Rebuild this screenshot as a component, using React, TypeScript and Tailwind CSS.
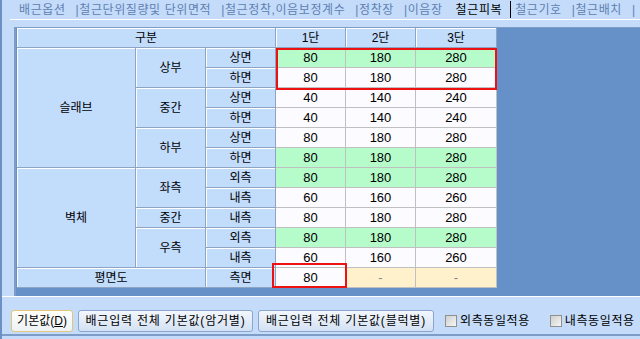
import React from 'react'

type Row = { cells: { text: string; cls: string }[]; vals: string[]; tone: 'g' | 'w' | 'y' }

const tabs = [
  { label: '배근옵션', active: false },
  { label: '|철근단위질량및 단위면적', active: false },
  { label: '|철근정착,이음보정계수', active: false },
  { label: '|정착장', active: false },
  { label: '|이음장', active: false },
  { label: '철근피복', active: true },
  { label: '철근기호', active: false },
  { label: '|철근배치', active: false },
  { label: '|', active: false },
]

const rows: Row[] = [
  { cells: [{ text: '슬래브', cls: 'row-span-6' }, { text: '상부', cls: 'row-span-2' }, { text: '상면', cls: '' }], vals: ['80', '180', '280'], tone: 'g' },
  { cells: [{ text: '하면', cls: '' }], vals: ['80', '180', '280'], tone: 'w' },
  { cells: [{ text: '중간', cls: 'row-span-2' }, { text: '상면', cls: '' }], vals: ['40', '140', '240'], tone: 'w' },
  { cells: [{ text: '하면', cls: '' }], vals: ['40', '140', '240'], tone: 'w' },
  { cells: [{ text: '하부', cls: 'row-span-2' }, { text: '상면', cls: '' }], vals: ['80', '180', '280'], tone: 'w' },
  { cells: [{ text: '하면', cls: '' }], vals: ['80', '180', '280'], tone: 'g' },
  { cells: [{ text: '벽체', cls: 'row-span-5' }, { text: '좌측', cls: 'row-span-2' }, { text: '외측', cls: '' }], vals: ['80', '180', '280'], tone: 'g' },
  { cells: [{ text: '내측', cls: '' }], vals: ['60', '160', '260'], tone: 'w' },
  { cells: [{ text: '중간', cls: '' }, { text: '내측', cls: '' }], vals: ['80', '180', '280'], tone: 'w' },
  { cells: [{ text: '우측', cls: 'row-span-2' }, { text: '외측', cls: '' }], vals: ['80', '180', '280'], tone: 'g' },
  { cells: [{ text: '내측', cls: '' }], vals: ['60', '160', '260'], tone: 'w' },
  { cells: [{ text: '평면도', cls: 'col-span-2' }, { text: '측면', cls: '' }], vals: ['80', '-', '-'], tone: 'y' },
]

const label =
  'flex items-center justify-center bg-[#c2dcfc] border-r border-b border-[#8fa3c2] shadow-[inset_1px_1px_0_#ffffff] text-[12px] text-black'

function valueTone(tone: Row['tone'], i: number) {
  if (tone === 'g') return 'bg-[#b6fcca]'
  if (tone === 'y') return i === 0 ? 'bg-[#fcfbff]' : 'bg-[#fff1cc] text-[#888]'
  return 'bg-[#fcfbff]'
}

function Checkbox({ label }: { label: string }) {
  return (
    <div className="flex items-center gap-[3px]">
      <span className="w-[12px] h-[12px] border border-[#8f9090] bg-gradient-to-br from-[#cfcfcf] to-[#f6f6f6]" />
      <span className="text-[12px] tracking-[0.6px] text-black">{label}</span>
    </div>
  )
}

export default function App() {
  return (
    <div className="w-[640px] h-[339px] bg-[#c4dcfa] border-l-2 border-[#6d90c4] flex flex-col font-['Liberation_Sans','Noto_Sans_CJK_KR',sans-serif] leading-none relative overflow-hidden">
      {/* tab strip */}
      <div className="h-[19px] flex items-center pl-[17px] text-[12px] text-[#5f80b2] tracking-[0.6px] whitespace-nowrap">
        {tabs.map((t, i) => (
          <span
            key={i}
            className={
              t.active
                ? 'shrink-0 h-[17px] flex items-center pl-[3px] pr-[8px] mr-[4px] text-black border-r border-black'
                : 'shrink-0 mr-[10px]'
            }
          >
            {t.label}
          </span>
        ))}
      </div>
      <div className="ml-[8px] h-px bg-white" />
      <div className="h-[7px]" />

      {/* grid panel */}
      <div className="ml-[12px] h-[269px] bg-[#6690c8] border-t border-l-2 border-[#7d9cc8]">
        <div className="ml-px grid grid-cols-[119px_70px_70px_70px_70px_81px] grid-rows-[repeat(13,20px)] w-[480px] text-[12px]">
          <div className={`${label} col-span-3`}>구분</div>
          {['1단', '2단', '3단'].map((h) => (
            <div key={h} className={label}>
              {h}
            </div>
          ))}
          {rows.map((r, ri) => (
            <React.Fragment key={ri}>
              {r.cells.map((c, ci) => (
                <div key={ci} className={`${label} ${c.cls}`}>
                  {c.text}
                </div>
              ))}
              {r.vals.map((v, vi) => (
                <div
                  key={vi}
                  className={`flex items-center justify-center border-r border-b border-[#c0c0c0] text-[13px] ${valueTone(r.tone, vi)}`}
                >
                  {v}
                </div>
              ))}
            </React.Fragment>
          ))}
        </div>
      </div>
      <div className="h-px bg-white" />

      {/* button row */}
      <div className="h-[37px] flex items-end gap-[5px] pl-[9px] pb-[2px]">
        <button className="h-[22px] w-[62px] rounded-[3px] border border-[#e3c778] bg-gradient-to-b from-[#fffffa] to-[#eef2f6] text-[12px] text-black">
          기본값(<span className="underline">D</span>)
        </button>
        <button className="h-[22px] w-[175px] rounded-[3px] border border-[#8ba6cc] bg-gradient-to-b from-[#f3f7fd] to-[#d3e1f4] text-[12px] text-black tracking-[0.8px]">
          배근입력 전체 기본값(암거별)
        </button>
        <button className="h-[22px] w-[176px] rounded-[3px] border border-[#8ba6cc] bg-gradient-to-b from-[#f3f7fd] to-[#d3e1f4] text-[12px] text-black tracking-[0.8px]">
          배근입력 전체 기본값(블럭별)
        </button>
        <div className="ml-[6px] h-[22px] flex items-center">
          <Checkbox label="외측동일적용" />
        </div>
        <div className="ml-[15px] h-[22px] flex items-center">
          <Checkbox label="내측동일적용" />
        </div>
      </div>
      <div className="h-[2px] bg-[#7d9cc8]" />

      {/* red highlight frames drawn over the grid */}
      <div className="absolute left-[274px] top-[48px] w-[221px] h-[42px] border-2 border-[#ee1111] pointer-events-none" />
      <div className="absolute left-[270px] top-[263px] w-[75px] h-[25px] border-2 border-[#ee1111] pointer-events-none" />
    </div>
  )
}
